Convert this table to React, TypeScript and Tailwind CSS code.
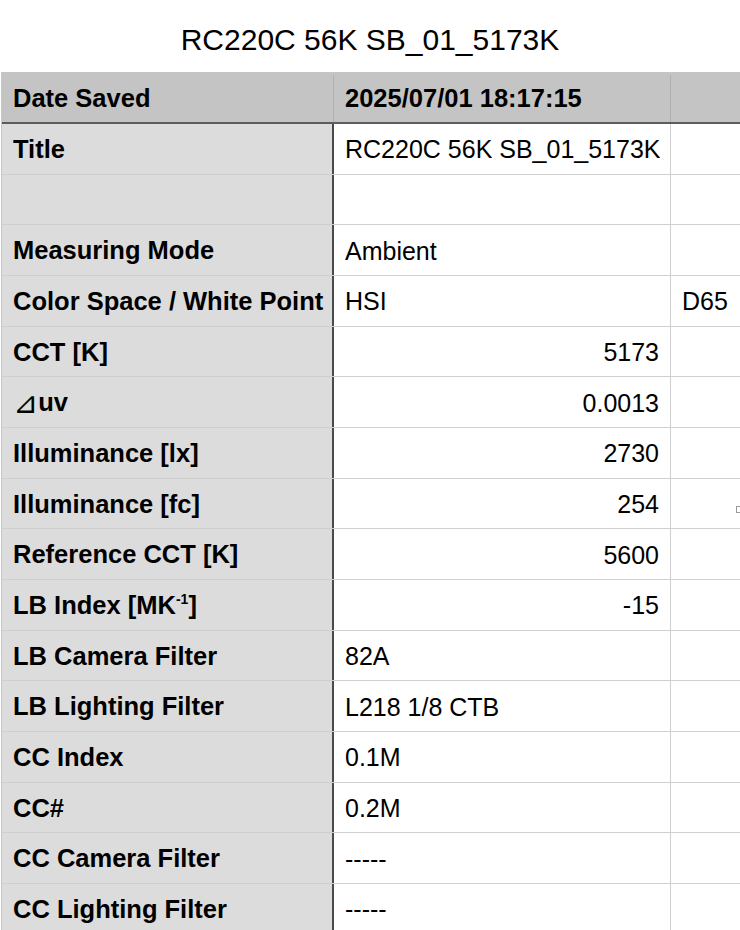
import type { ReactNode } from "react";

type Row = {
  label: ReactNode;
  value?: string;
  align?: "left" | "right";
  extra?: string;
};

const rows: Row[] = [
  { label: "Title", value: "RC220C 56K SB_01_5173K" },
  { label: "" },
  { label: "Measuring Mode", value: "Ambient" },
  { label: "Color Space / White Point", value: "HSI", extra: "D65" },
  { label: "CCT [K]", value: "5173", align: "right" },
  {
    label: (
      <>
        <span className="font-normal font-['DejaVu_Sans',sans-serif] text-[30px] leading-none">⊿</span>uv
      </>
    ),
    value: "0.0013",
    align: "right",
  },
  { label: "Illuminance [lx]", value: "2730", align: "right" },
  { label: "Illuminance [fc]", value: "254", align: "right" },
  { label: "Reference CCT [K]", value: "5600", align: "right" },
  {
    label: (
      <>
        LB Index [MK<sup className="text-[14px]">-1</sup>]
      </>
    ),
    value: "-15",
    align: "right",
  },
  { label: "LB Camera Filter", value: "82A" },
  { label: "LB Lighting Filter", value: "L218 1/8 CTB" },
  { label: "CC Index", value: "0.1M" },
  { label: "CC#", value: "0.2M" },
  { label: "CC Camera Filter", value: "-----" },
  { label: "CC Lighting Filter", value: "-----" },
];

export default function App() {
  return (
    <div className="relative h-[930px] w-[740px] overflow-hidden bg-white font-['Liberation_Sans',Arial,sans-serif] text-black">
      {/* Sheet title */}
      <div className="flex h-[72px] items-center justify-center pt-[8px] text-[30px] leading-none">
        RC220C 56K SB_01_5173K
      </div>

      {/* Table */}
      <div className="ml-px w-[800px] border-l border-t border-[#c6c6c6] text-[25px] leading-none">
        {/* Header */}
        <div className="grid h-[51px] grid-cols-[332px_337px_131px] border-b-2 border-[#5c5c5c] bg-[#c3c4c3] pt-[2px] text-[25.5px] font-bold">
          <div className="flex items-center border-r border-[#b0b0b0] pl-[11px]">Date Saved</div>
          <div className="flex items-center border-r border-[#b0b0b0] pl-[11px]">2025/07/01 18:17:15</div>
          <div />
        </div>

        {rows.map((row, i) => (
          <div
            key={i}
            className="grid h-[50.67px] grid-cols-[332px_337px_131px] border-b border-[#cfcfcf]"
          >
            <div className="flex items-center border-r-2 border-[#4a4a4a] bg-[#dcdcdc] pl-[11px] pt-[2px] text-[25.5px] font-bold">
              {row.label}
            </div>
            <div
              className={
                row.align === "right"
                  ? "flex items-center justify-end border-r border-[#cfcfcf] pr-[11px] pt-[2px]"
                  : "flex items-center border-r border-[#cfcfcf] pl-[11px] pt-[2px]"
              }
            >
              {row.value}
            </div>
            <div className="flex items-center pl-[11px] pt-[2px]">{row.extra}</div>
          </div>
        ))}
      </div>

      {/* resize handle peeking at the edge */}
      <div className="absolute left-[736px] top-[506px] h-[7px] w-[6px] border border-[#9a9a9a] bg-white" />
    </div>
  );
}
